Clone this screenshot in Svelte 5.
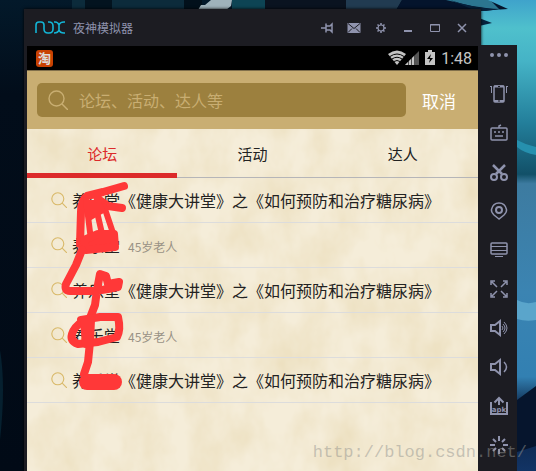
<script>
  let tabs = ['论坛', '活动', '达人'];
  let active = $state(0);
  let query = $state('');
  const course = '养乐堂《健康大讲堂》之《如何预防和治疗糖尿病》';
  const rows = [
    { title: course },
    { title: '养乐堂', note: '45岁老人' },
    { title: course },
    { title: '养乐堂', note: '45岁老人' },
    { title: course }
  ];
  const tools = ['摇一摇', '键盘', '截图', '定位', '屏幕', '全屏', '音量加', '音量减', '安装', '加速'];
</script>

{#snippet glass()}
  <svg class="glass" viewBox="0 0 20 20" aria-hidden="true"><circle cx="8.5" cy="8.5" r="7.5" /><path d="M14 14l6 6" /></svg>
{/snippet}

<div class="desktop">
  <svg class="wallpaper" viewBox="0 0 536 471" preserveAspectRatio="none" aria-hidden="true">
    <defs>
      <linearGradient id="sea" x1="0" y1="0" x2="0" y2="1">
        <stop offset="0" stop-color="#3fa3cb" />
        <stop offset=".06" stop-color="#4fc0cc" />
        <stop offset=".13" stop-color="#45b3c6" />
        <stop offset=".26" stop-color="#237f9b" />
        <stop offset=".37" stop-color="#125068" />
        <stop offset=".39" stop-color="#3d7ba0" />
        <stop offset=".62" stop-color="#3b84b2" />
        <stop offset=".8" stop-color="#3280b2" />
        <stop offset=".87" stop-color="#0a1f3f" />
        <stop offset="1" stop-color="#123465" />
      </linearGradient>
      <linearGradient id="night" x1="0" y1="0" x2="0" y2="1">
        <stop offset="0" stop-color="#03192a" />
        <stop offset=".2" stop-color="#020d1a" />
        <stop offset="1" stop-color="#010a16" />
      </linearGradient>
    </defs>
    <rect width="536" height="471" fill="url(#night)" />
    <path d="M72 0h112v12H72z" fill="#0c2b3b" />
    <path d="M85 0h27v12H85z" fill="#03131f" />
    <path d="M184 0h18v12h-18z" fill="#02101b" />
    <path d="M198 10l3-5h4l6-5h21l-1 6-5 4z" fill="#9fb2bb" />
    <path d="M232 0h33v12h-33z" fill="#0d4454" />
    <path d="M265 0h81v12h-81z" fill="#0a1320" />
    <path d="M346 0h56l-7 12h-49z" fill="#213b51" />
    <path d="M402 0h134v12H395z" fill="#04142c" />
    <path d="M446 0h44l10 10-28-4z" fill="#2c7690" />
    <path d="M488 0h48v471h-58V11l30-2z" fill="url(#sea)" />
    <path d="M450 0q25 9 50 9l-14 2h-10zM479 18l13 5-13 3z" fill="#06223d" />
    <path d="M517 140q9 5 19 7v8q-12-2-19-8z" fill="#2690ae" />
    <path d="M517 300q9 5 19 2v18q-10 2-19-1z" fill="#5aa5cb" />
    <path d="M517 400l19-14v60l-19 6z" fill="#06152d" />
    <path d="M0 350q6 35 0 90z" fill="#06202f" />
  </svg>

  <div class="emulator">
    <div class="main">
      <header class="titlebar">
        <svg class="nox" viewBox="0 0 30 13" aria-label="nox"><path d="M1 12V4q0-3 3-3h2q3 0 3 3v4q0 4 4 4h1q4 0 4-4V5q0-4-4-4h-1M19 1h1q3 0 4 3v5q1 3 5 3h1M30 1h-1q-4 0-5 3v5q-1 3-5 3" /></svg>
        <span class="name">夜神模拟器</span>
        <div class="controls">
          <button aria-label="置顶"><svg viewBox="0 0 14 14"><path d="M1 7h5M6 2.500v9M6 5h4l2-2v8l-2-2H6" /></svg></button>
          <button aria-label="消息"><svg viewBox="0 0 14 14"><path d="M.5 2h13v10H.5z" fill="#8f93ad" stroke="none" /><path d="M1 2.500l6 5 6-5M1 11.500l4-4M13 11.500l-4-4" stroke="#1c1c22" stroke-width="1" /></svg></button>
          <button aria-label="设置"><svg viewBox="0 0 14 14"><circle cx="7" cy="7" r="3" stroke-width="1.2" /><path d="M7 2v2M7 10v2M2 7h2M10 7h2M3.500 3.500l1.300 1.300M9.200 9.200l1.300 1.300M10.500 3.500L9.200 4.800M4.800 9.200l-1.300 1.300" /></svg></button>
          <button aria-label="最小化"><svg viewBox="0 0 14 14"><path d="M3 10h8" stroke-width="2" /></svg></button>
          <button aria-label="最大化"><svg viewBox="0 0 14 14"><path d="M2.500 3.500h9v7h-9zM2 4h10" stroke-width="1" /></svg></button>
          <button aria-label="关闭"><svg viewBox="0 0 14 14"><path d="M3 3l8 8M11 3l-8 8" /></svg></button>
        </div>
      </header>

      <div class="phone">
        <div class="status">
          <span class="tao">淘</span>
          <div class="signals">
            <svg class="net" viewBox="0 0 32 16" aria-hidden="true">
              <path d="M0 4Q9-3 18 4L9 15Z" fill="#c4c4c4" />
              <path d="M2 6.500q7-5 14 0M4 9q5-3.500 10 0M6 11.500q3-2 6 0" fill="none" stroke="#000" stroke-width="1" />
              <path d="M17 15L31 1v14z" fill="#555" /><path d="M17 15L27 5v10z" fill="#c4c4c4" />
              <path d="M20.500 5v10M23.500 5v10M26.500 2v13" stroke="#000" stroke-width=".6" />
            </svg>
            <svg class="battery" viewBox="0 0 10 16" aria-hidden="true"><path d="M3 0h4v2h3v13H0V2h3z" fill="#c4c4c4" /><path d="M6 4L2 9h3l-1 4 4-5H5z" fill="#000" /></svg>
            <span>1:48</span>
          </div>
        </div>

        <form class="search" onsubmit={(e) => e.preventDefault()}>
          <label class="field">
            {@render glass()}
            <input type="text" aria-label="搜索" placeholder="论坛、活动、达人等" bind:value={query} />
          </label>
          <button type="button" class="cancel">取消</button>
        </form>

        <div class="paper">
          <svg class="grain" aria-hidden="true">
            <filter id="fibre" x="0" y="0" width="100%" height="100%">
              <feTurbulence type="fractalNoise" baseFrequency=".03 .02" numOctaves="4" seed="8" />
              <feColorMatrix values="0 0 0 0 .84  0 0 0 0 .74  0 0 0 0 .52  1.600 0 0 0 -.5" />
            </filter>
            <rect width="100%" height="100%" filter="url(#fibre)" />
          </svg>
          <div class="tabs" role="tablist">
            {#each tabs as tab, i}
              <button role="tab" aria-selected={active === i} class:active={active === i} onclick={() => (active = i)}>{tab}</button>
            {/each}
          </div>
          <div class="results">
            {#each rows as row}
              <a class="row" href="#result">
                {@render glass()}
                <span>{row.title}</span>
                {#if row.note}<small>{row.note}</small>{/if}
              </a>
            {/each}
            <svg class="scribble" viewBox="27 178 120 226" aria-hidden="true">
              <path d="M124 186L103 192 87 196Q81 200 81 212L80 244M98 199L108 206 122 208" stroke-width="8" />
              <path d="M86 200L91 240M95 203L103 238M104 206L114 236" stroke-width="6" />
              <path d="M88 200L100 200 106 212 98 216 88 222Z" fill="#ff3838" stroke="none" />
              <path d="M84 240L98 234 114 234 115 247 86 250Z" fill="#ff3838" stroke-width="8" />
              <path d="M82 250L76 265 66 284Q64 291 70 291H95L108 289 118 287 119 282 108 284 106 276 100 274 97 290 95 305 90 318" stroke-width="8" />
              <path d="M81 320L100 317 118 317Q121 330 117 337L98 342 78 344Q70 341 72 334T83 321" stroke-width="8" />
              <path d="M84 322L86 344M91 320L90 342 88 362 84 374" stroke-width="8" />
              <path d="M87 382H114" stroke-width="16" />
            </svg>
          </div>
        </div>
      </div>
    </div>

    <aside class="rail">
      <button class="more" aria-label="更多"><svg viewBox="0 0 18 18"><path d="M0 9a2 2 0 1 0 4 0a2 2 0 1 0-4 0M7 9a2 2 0 1 0 4 0a2 2 0 1 0-4 0M14 9a2 2 0 1 0 4 0a2 2 0 1 0-4 0" fill="#8f93ad" stroke="none" /></svg></button>
      {#each tools as tool, i}
        <button aria-label={tool}>
          <svg viewBox="0 0 18 18">
            {#if i === 0}
              <rect x="4" y="1" width="10" height="16" rx="1" stroke-width="1.5" /><path d="M4 1.500h10M4 16h10" stroke-width="2" /><path d="M8 1.500h2M8 16h2" stroke="#1c1c22" stroke-width="1" /><path d="M0 1.500h2M1.500 2v6M18 1.500h-2M16.500 2v6" stroke-width="1" />
            {:else if i === 1}
              <rect x="1" y="4" width="16" height="12" rx="1" stroke-width="1.5" /><path d="M9 4V2l2-1M4 8h2M8 8h2M12 8h2M5 12h8" stroke-width="1.5" />
            {:else if i === 2}
              <circle cx="4" cy="14" r="3" /><circle cx="14" cy="14" r="3" /><path d="M3 2l9 9M15 2l-9 9" stroke-width="2.500" />
            {:else if i === 3}
              <path d="M9 17L4 13Q1 10 1.500 7.500 3 1 9 1t7.500 6.500Q17 10 14 13Z" stroke-width="1.5" /><circle cx="9" cy="8" r="3" />
            {:else if i === 4}
              <rect x="1" y="2" width="16" height="11" rx="1" stroke-width="1.5" /><path d="M1 5.500h16M1 9.500h16M5 15.500h8" stroke-width="1" />
            {:else if i === 5}
              <path d="M1 5V1h4M13 1h4v4M17 13v4h-4M5 17H1v-4M2 2l5 5M16 2l-5 5M16 16l-5-5M2 16l5-5" stroke-width="1.500" />
            {:else if i === 6}
              <path d="M1 6h4l5-4v14l-5-4H1z" /><path d="M12 7q2 2 0 4M13 5q4 4 0 8M14 3q6 6 0 12" stroke-width="1" />
            {:else if i === 7}
              <path d="M1 6h4l5-4v14l-5-4H1z" /><path d="M14 4q5 5 0 10" stroke-width="1.500" />
            {:else if i === 8}
              <path d="M1 5v12h16V5" /><path d="M9 8V1M4.500 5.500L9 1l4.500 4.500" /><text x="9" y="15" text-anchor="middle">apk</text>
            {:else}
              <path d="M9 0v5M9 13v5M0 9h5M13 9h5M3 3l3 3M12 12l3 3M15 3l-3 3M6 12l-3 3" />
            {/if}
          </svg>
        </button>
      {/each}
    </aside>
  </div>
  <span class="watermark">http://blog.csdn.net/</span>
</div>

<style>
  :global(body) { margin: 0; }
  .desktop { position: relative; box-sizing: border-box; min-height: 100vh; padding: 9px 19px 0 24px; display: flex; overflow: hidden; background: #020b17; font-family: "Noto Sans CJK SC", sans-serif; }
  button { margin: 0; padding: 0; border: 0; background: none; font: inherit; color: inherit; }
  .wallpaper { position: absolute; inset: 0; width: 100%; height: 100%; }
  .emulator { position: relative; flex: 1; display: flex; min-width: 0; }
  .main { flex: 1; min-width: 0; display: flex; flex-direction: column; background: #1c1c22; box-shadow: 0 0 3px #000; }
  .titlebar { display: flex; align-items: center; height: 37px; padding: 0 12px 0 11px; color: #8f93ad; font-size: 12px; }
  .nox { width: 30px; height: 13px; fill: none; stroke: #13b5d6; stroke-width: 1.6; }
  .name { margin-left: 8px; }
  .controls { margin-left: auto; display: flex; gap: 13px; }
  .controls button { display: flex; }
  .controls svg { width: 14px; height: 14px; fill: none; stroke: #8f93ad; stroke-width: 1.5; }
  .phone { flex: 1; display: flex; flex-direction: column; margin: 0 3px; }
  .status { display: flex; align-items: center; justify-content: space-between; height: 24px; padding: 0 6px 0 9px; background: #000; color: #c4c4c4; }
  .tao { width: 17px; height: 17px; border-radius: 3px; background: #c94102; color: #ddd; font-size: 13px; font-weight: 700; line-height: 16px; text-align: center; }
  .signals { display: flex; align-items: center; font: 16px Roboto, sans-serif; }
  .net { width: 32px; height: 16px; }
  .battery { width: 10px; height: 16px; margin: 0 6px 0 5px; }
  .search { display: flex; align-items: center; height: 59px; padding-left: 10px; box-sizing: border-box; border-top: 1px solid #81704b; background: #c9ae72; }
  .field { flex: 1; min-width: 0; display: flex; align-items: center; height: 34px; padding: 0 11px; box-sizing: border-box; border-radius: 5px; background: #9c803e; color: #c9ae72; }
  .glass { flex: none; width: 20px; height: 20px; fill: none; stroke: currentColor; stroke-width: 1.4; }
  input { flex: 1; min-width: 0; margin-left: 11px; padding: 0; border: 0; outline: 0; background: none; color: #fff; font: 16px "Noto Sans CJK SC", sans-serif; }
  input::placeholder { color: #c9ae72; opacity: 1; }
  .cancel { width: 72px; padding-right: 6px; color: #fff; font-size: 17px; }
  .paper { position: relative; flex: 1; background: #f5edd9; color: #222; }
  .grain { position: absolute; inset: 0; width: 100%; height: 100%; }
  .tabs { position: relative; display: flex; height: 49px; box-shadow: inset 0 -1px #b5b5b8; }
  .tabs button { flex: 1; border-bottom: 5px solid transparent; padding-top: 5px; font-size: 15px; }
  .tabs .active { border-color: #dc2a2a; color: #dc2a2a; }
  .results { position: relative; }
  .row { display: flex; align-items: center; height: 45px; box-sizing: border-box; padding-left: 24px; border-bottom: 1px solid #dcdcdc; color: #222; font-size: 16px; text-decoration: none; white-space: nowrap; }
  .row .glass { width: 16px; height: 16px; margin-right: 5px; color: #d9b969; }
  .row small { margin: 2px 0 0 8px; color: #999285; font-size: 12px; }
  .scribble { position: absolute; left: 0; top: 0; width: 120px; height: 226px; fill: none; stroke: #ff3838; stroke-linecap: round; stroke-linejoin: round; pointer-events: none; }
  .rail { position: relative; width: 39px; margin: 36px 0 0 -3px; background: #1c1c22; }
  .rail button { display: flex; align-items: center; justify-content: center; width: 100%; height: 39px; padding-left: 3px; }
  .rail .more { height: 29px; align-items: flex-start; padding-top: 1px; }
  .rail svg { width: 18px; height: 18px; fill: none; stroke: #8f93ad; stroke-width: 2; overflow: visible; }
  .rail text { fill: #8f93ad; stroke: none; font: 700 7px "DejaVu Sans", sans-serif; }
  .watermark { position: absolute; right: 9px; bottom: 9px; color: rgba(150, 150, 145, .5); font: 17px "Liberation Mono", monospace; pointer-events: none; }
</style>
